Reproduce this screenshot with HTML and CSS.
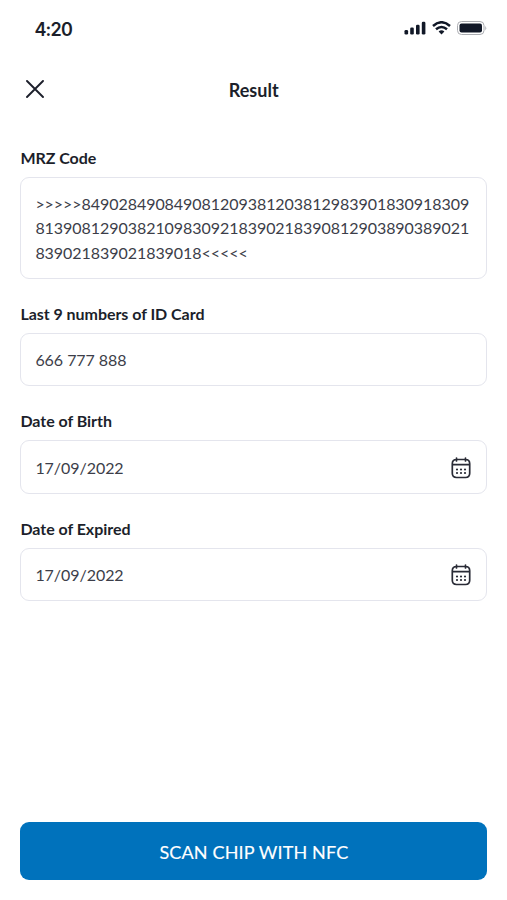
FILE: index.html
```html
<!DOCTYPE html>
<html lang="en">
<head>
<meta charset="utf-8">
<title>Result</title>
<link rel="stylesheet" href="styles.css">
</head>
<body>
<main class="screen">
  <div class="status">
    <span class="time">4:20</span>
    <div class="indicators">
      <svg width="22" height="14" viewBox="0 0 22 14" fill="#111827"><rect x="0.5" y="9" width="3.600" height="4.500" rx="1.300"/><rect x="6.200" y="6.500" width="3.600" height="7" rx="1.300"/><rect x="12" y="3.700" width="3.600" height="9.800" rx="1.300"/><rect x="17.800" y="0.800" width="3.600" height="12.700" rx="1.300"/></svg>
      <svg width="19" height="14" viewBox="0 0 19 14" fill="none" stroke="#111827" stroke-width="2.500"><path d="M1 5Q9.500-2.500 18 5M4 8.300Q9.500 3.700 15 8.300"/><path d="M6.600 10.400Q9.500 8.200 12.400 10.400L9.500 13.400Z" fill="#111827" stroke="none"/></svg>
      <svg width="30" height="15" viewBox="0 0 30 15"><rect x=".5" y=".5" width="26.500" height="13" rx="4" fill="none" stroke="#aaacb1"/><rect x="2.500" y="2.500" width="22.500" height="9" rx="2" fill="#111827"/><path d="M28.300 5Q30.200 7.200 28.300 9.400Z" fill="#aaacb1"/></svg>
    </div>
  </div>
  <header class="header">
    <svg class="close" width="18" height="18" viewBox="0 0 18 18"><path d="M1 1L17 17M17 1L1 17"/></svg>
    <h1>Result</h1>
  </header>
  <section class="form">
    <div class="field"><h2>MRZ Code</h2><div class="box code"><span>&gt;&gt;&gt;&gt;&gt;849028490849081209381203812983901830918309</span><span>81390812903821098309218390218390812903890389021</span><span>839021839021839018&lt;&lt;&lt;&lt;&lt;</span></div></div>
    <div class="field"><h2>Last 9 numbers of ID Card</h2><div class="box">666 777 888</div></div>
    <div class="field"><h2>Date of Birth</h2><div class="box">17/09/2022<svg class="calendar" width="20" height="22" viewBox="0 0 20 22"><use href="#cal"/></svg></div></div>
    <div class="field"><h2>Date of Expired</h2><div class="box">17/09/2022<svg class="calendar" width="20" height="22" viewBox="0 0 20 22"><g id="cal"><path d="M5.500 1V4M14.500 1V4M1.500 7.700H18.500M5.500 2.500H14.500Q18.700 2.500 18.700 6.700V16.300Q18.700 20.500 14.500 20.500H5.500Q1.300 20.500 1.300 16.300V6.700Q1.300 2.500 5.500 2.500Z"/><path class="dots" d="M6 12.500h.01M10 12.500h.01M14 12.500h.01M6 16h.01M10 16h.01M14 16h.01"/></g></svg></div></div>
  </section>
  <button class="scan">SCAN CHIP WITH NFC</button>
</main>
</body>
</html>
```
FILE: styles.css
```css
* { box-sizing: border-box; }
body { margin: 0; background: #fff; color: #1c1f2b; font-family: Lato, sans-serif; }
.screen { width: 507px; height: 900px; padding: 0 20px 20px 20.4px; display: flex; flex-direction: column; }
.status { height: 56px; padding-left: 14px; display: flex; align-items: center; justify-content: space-between; }
.time { padding-top: 3px; font: 600 18px/22px Inter, sans-serif; letter-spacing: -.8px; }
.indicators { display: flex; align-items: center; gap: 6px; }
.header { height: 66px; display: grid; grid-template-columns: 40px 1fr 40px; align-items: center; }
.close { margin-left: 5.6px; fill: none; stroke: #1c1f2b; stroke-width: 1.9; stroke-linecap: round; }
h1 { margin: 0; padding-top: 1px; text-align: center; font-size: 18px; line-height: 24px; font-weight: 700; }
.form { padding-top: 24.5px; display: flex; flex-direction: column; gap: 24px; }
h2 { margin: 0 0 8px; font-size: 16px; line-height: 22px; font-weight: 700; letter-spacing: -.04px; }
.box { height: 53.5px; padding: 1.5px 14px 0; border: 1px solid #e4e5ed; border-radius: 9px; display: flex; align-items: center; justify-content: space-between; color: #3c3e49; font-size: 16px; line-height: 24.5px; letter-spacing: -.05px; }
.code { height: 102.3px; flex-direction: column; align-items: flex-start; justify-content: center; }
.code span { white-space: nowrap; }
.calendar { margin-right: 1.5px; fill: none; stroke: #292b36; stroke-width: 1.7; stroke-linecap: round; }
.dots { stroke-width: 2.2; }
.scan { width: 467px; height: 58px; margin-top: auto; padding-top: 2px; border: 0; border-radius: 9px; background: #0072bc; color: #fff; font: 400 18px/24px Lato, sans-serif; letter-spacing: .15px; -webkit-text-stroke: .15px #fff; }
```
